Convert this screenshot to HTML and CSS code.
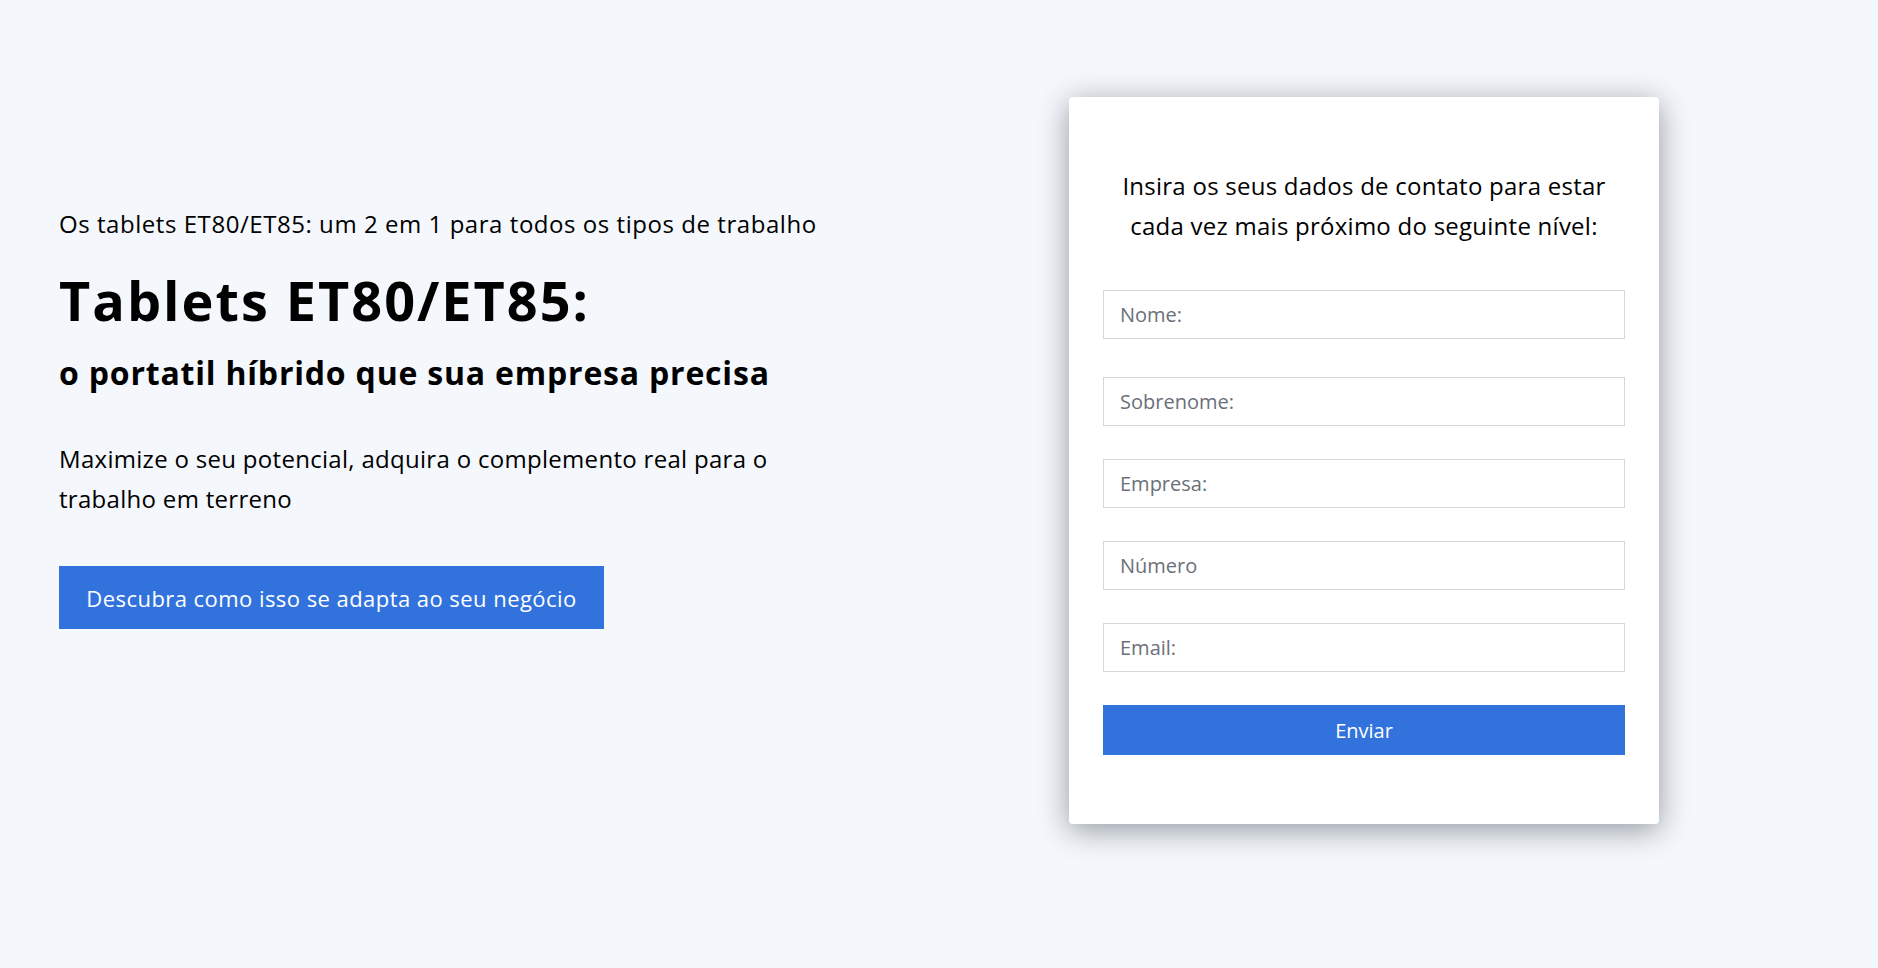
FILE: index.html
```html
<!DOCTYPE html>
<html lang="pt">
<head>
<meta charset="utf-8">
<title>Tablets ET80/ET85</title>
<link rel="stylesheet" href="styles.css">
</head>
<body>
<section class="hero">
  <div class="intro">
    <p class="eyebrow">Os tablets ET80/ET85: um 2 em 1 para todos os tipos de trabalho</p>
    <h1 class="title">Tablets ET80/ET85:</h1>
    <h2 class="subtitle">o portatil híbrido que sua empresa precisa</h2>
    <p class="lead">Maximize o seu potencial, adquira o complemento real para o trabalho em terreno</p>
    <a class="cta" href="#form">Descubra como isso se adapta ao seu negócio</a>
  </div>
  <form class="card" id="form">
    <p class="card-title">Insira os seus dados de contato para estar cada vez mais próximo do seguinte nível:</p>
    <input class="field field-first" type="text" placeholder="Nome:">
    <input class="field" type="text" placeholder="Sobrenome:">
    <input class="field" type="text" placeholder="Empresa:">
    <input class="field" type="text" placeholder="Número">
    <input class="field" type="email" placeholder="Email:">
    <button class="submit" type="button">Enviar</button>
  </form>
</section>
</body>
</html>
```

FILE: styles.css
```css
* { box-sizing: border-box; }
html, body { margin: 0; padding: 0; }
body {
  background: #f4f7fb;
  font-family: "Open Sans", "Liberation Sans", sans-serif;
  color: #000;
  height: 968px;
  overflow: hidden;
}
.hero {
  display: flex;
  justify-content: space-between;
  align-items: flex-start;
  padding: 97px 219px 0 59px;
}
.intro {
  width: 800px;
  padding-top: 109px;
  display: flex;
  flex-direction: column;
  align-items: flex-start;
}
.eyebrow {
  margin: 0;
  font-size: 24px;
  line-height: 36px;
  letter-spacing: 0.55px;
  white-space: nowrap;
}
.title {
  margin: 27px 0 0;
  font-size: 54px;
  line-height: 62px;
  font-weight: 700;
  letter-spacing: 2px;
}
.subtitle {
  margin: 22px 0 0;
  font-size: 32px;
  line-height: 40px;
  font-weight: 700;
  letter-spacing: 0.8px;
}
.lead {
  margin: 46px 0 0;
  width: 740px;
  font-size: 24px;
  line-height: 40px;
  letter-spacing: 0.3px;
}
.cta {
  margin-top: 47px;
  display: flex;
  align-items: center;
  justify-content: center;
  width: 545px;
  height: 63px;
  background: #3272dd;
  color: #fff;
  text-decoration: none;
  font-size: 22px;
  letter-spacing: 0.45px;
}
.card {
  width: 590px;
  height: 727px;
  background: #fff;
  border-radius: 4px;
  box-shadow: 0 6px 30px rgba(30, 40, 52, 0.45);
  padding: 69px 34px 0;
  display: flex;
  flex-direction: column;
  margin: 0;
}
.card-title {
  margin: 0 0 44px;
  text-align: center;
  font-size: 24px;
  line-height: 40px;
  letter-spacing: 0.25px;
}
.field {
  display: block;
  width: 100%;
  height: 49px;
  border: 1px solid #d4d7db;
  border-radius: 0;
  background: #fff;
  padding: 0 16px;
  margin: 0 0 33px;
  font-family: inherit;
  font-size: 20px;
  color: #333;
  outline: none;
}
.field-first { margin-bottom: 38px; }
.field::placeholder { color: #6b7079; }
.submit {
  display: block;
  width: 100%;
  height: 50px;
  border: 0;
  background: #3272dd;
  color: #fff;
  font-family: inherit;
  font-size: 20px;
  cursor: pointer;
}
```
